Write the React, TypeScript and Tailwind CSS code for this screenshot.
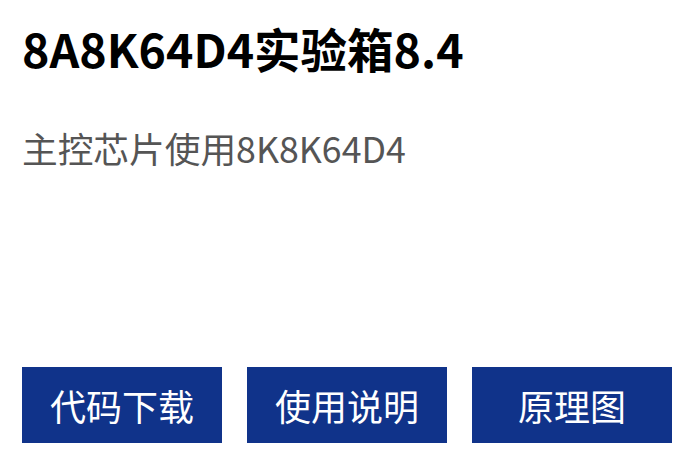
const font = { fontFamily: '"Noto Sans CJK SC", "Noto Sans", sans-serif' }

const links = ['代码下载', '使用说明', '原理图']

export default function App() {
  return (
    <div className="w-[689px] h-[461px] bg-white px-[22px] flex flex-col" style={font}>
      <h1 className="mt-[20px] text-[46.5px] leading-[56px] font-bold text-black">
        8A8K64D4实验箱8.4
      </h1>
      <p className="mt-[52px] text-[35.7px] leading-[40px] text-[#555555]">
        主控芯片使用8K8K64D4
      </p>
      <div className="mt-auto mb-[18px] flex gap-[25px]">
        {links.map((label) => (
          <a
            key={label}
            href="#"
            className="shrink-0 w-[200px] h-[76px] bg-[#10338a] text-white text-[36px] flex items-center justify-center"
          >
            {label}
          </a>
        ))}
      </div>
    </div>
  )
}
